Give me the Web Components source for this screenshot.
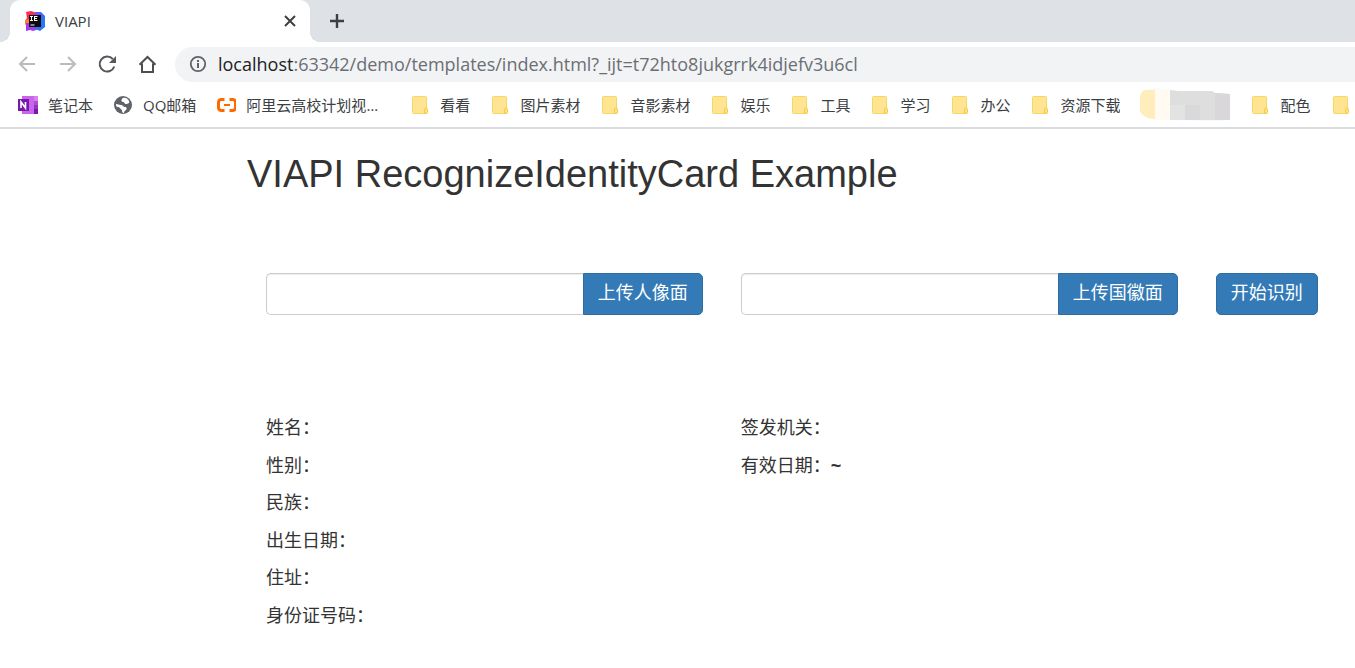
<!DOCTYPE html>
<html lang="zh-CN">
<head>
<meta charset="utf-8">
<title>VIAPI</title>
<style>
html, body { margin: 0; background: #fff; }
body { font-family: "Open Sans", "Noto Sans CJK SC", sans-serif; color: #333; overflow-x: hidden; }
</style>
</head>
<body>
<browser-frame>
  <identity-page></identity-page>
</browser-frame>

<script>
const define = (name, html) => {
  const template = document.createElement('template');
  template.innerHTML = html;
  customElements.define(name, class extends HTMLElement {
    constructor() {
      super();
      this.attachShadow({ mode: 'open' }).append(template.content.cloneNode(true));
    }
  });
};

define('folder-icon', `
<style>:host { display: block; width: 20px; height: 20px; } svg { display: block; }</style>
<svg width="20" height="20" viewBox="0 0 20 20" aria-hidden="true">
  <rect x="2.5" y="1.5" width="14" height="17" rx="1" fill="#ffe591" stroke="#f8d665"/>
  <path d="M14.5 18.500V14.500q0-1.500 1.500-1.500t1.500 1.500v2.500q0 1.500-1.500 1.500z" fill="#ffe27f" stroke="#f6cb45"/>
</svg>`);

define('bookmark-link', `
<style>
:host { display: block; flex: none; }
a { display: flex; align-items: center; gap: 10px; color: #3c4043; text-decoration: none; font-size: 15px; line-height: 20px; white-space: nowrap; }
.icon { width: 20px; height: 20px; flex: none; }
.label { overflow: hidden; text-overflow: ellipsis; max-width: 144px; }
::slotted(svg) { display: block; }
</style>
<a href="#"><span class="icon"><slot name="icon"><folder-icon></folder-icon></slot></span><span class="label"><slot></slot></span></a>`);

define('tab-strip', `
<style>
:host { display: flex; height: 42px; background: #dee1e6; padding-left: 10px; }
.tab { position: relative; display: flex; align-items: center; box-sizing: border-box; width: 300px; padding: 0 12px 0 15px; gap: 10px; background: #fff; border-radius: 10px 10px 0 0; }
.tab::before, .tab::after { content: ""; position: absolute; bottom: 0; width: 10px; height: 10px; }
.tab::before { right: 100%; background: radial-gradient(circle at 0 0, transparent 10px, #fff 10px); }
.tab::after { left: 100%; background: radial-gradient(circle at 100% 0, transparent 10px, #fff 10px); }
.title { flex: 1; font-size: 15px; line-height: 20px; color: #3c4043; }
button { border: 0; background: none; padding: 0; display: grid; place-items: center; }
.new { width: 24px; margin-left: 15px; }
svg { display: block; }
</style>
<div class="tab">
  <svg width="20" height="20" viewBox="0 0 20 20" aria-hidden="true">
    <path d="M1 1 6 0l6 2-3 9-7 2-2-3 2-3z" fill="#fe2b57"/>
    <path d="M0 9l5-1 3 7-5 2-3-4z" fill="#fb8420"/>
    <path d="M1 12l4 0 9 6-6 2-3-1-4 1z" fill="#a63af0"/>
    <path d="M10 1h6l4 4v11l-5 4-6-3z" fill="#2b74f6"/>
    <path d="M10 1h5l2 4-7 3z" fill="#6b57f5"/>
    <rect x="4" y="4" width="12" height="12" fill="#0c0c0c"/>
    <path d="M5 5.500H8M5 9.500H8M6.500 5.500v4M9.500 5v5M9.500 5.500h3M9.500 7.500h2.500M9.500 9.500h3M5.500 14h4" stroke="#fff" fill="none"/>
  </svg>
  <span class="title">VIAPI</span>
  <button aria-label="关闭标签页"><svg width="16" height="16" viewBox="0 0 16 16"><path d="M3 3l10 10M13 3 3 13" stroke="#3c4043" stroke-width="2"/></svg></button>
</div>
<button class="new" aria-label="新标签页"><svg width="16" height="16" viewBox="0 0 16 16"><path d="M8 1v14M1 8h14" stroke="#3c4043" stroke-width="2.400"/></svg></button>`);

define('nav-toolbar', `
<style>
:host { display: flex; align-items: center; box-sizing: border-box; height: 46px; padding: 0 0 2px 17px; }
nav { display: flex; gap: 20px; width: 158px; flex: none; }
button { border: 0; background: none; padding: 0; width: 20px; height: 20px; }
svg { display: block; flex: none; }
.address { flex: 1; display: flex; align-items: center; gap: 11px; height: 35px; padding-left: 14px; background: #f1f3f4; border-radius: 18px 0 0 18px; }
.url { font-size: 18px; line-height: 26px; color: #6b6f74; outline: none; white-space: nowrap; }
.host { color: #202124; }
</style>
<nav aria-label="导航">
  <button aria-label="后退"><svg width="20" height="20" viewBox="0 0 20 20" fill="none" stroke="#b9bbbe" stroke-width="2"><path d="M18 10H4M10 3l-7 7 7 7"/></svg></button>
  <button aria-label="前进"><svg width="20" height="20" viewBox="0 0 20 20" fill="none" stroke="#b9bbbe" stroke-width="2"><path d="M3 10h14M11 3l7 7-7 7"/></svg></button>
  <button aria-label="重新加载"><svg width="20" height="20" viewBox="0 0 20 20" fill="none" stroke="#55595e" stroke-width="2"><path d="M17.300 12.500A7.500 7.500 0 1 1 15.800 5"/><path d="M19 2v7h-7z" fill="#55595e" stroke="none"/></svg></button>
  <button aria-label="主页"><svg width="20" height="20" viewBox="0 0 20 20" fill="none" stroke="#4b4f54" stroke-width="2"><path d="M2.500 10.700 10.500 3l8 7.700M5 9.500V18h11V9.500"/></svg></button>
</nav>
<div class="address">
  <svg width="18" height="18" viewBox="0 0 18 18" aria-hidden="true"><circle cx="9" cy="9" r="7.200" fill="none" stroke="#5f6368" stroke-width="1.800"/><path d="M9 8v5M9 5v2" stroke="#5f6368" stroke-width="2"/></svg>
  <div class="url" role="textbox" aria-label="地址栏" contenteditable="true" spellcheck="false"><span class="host">localhost</span>:63342/demo/templates/index.html?_ijt=t72hto8jukgrrk4idjefv3u6cl</div>
</div>`);

define('bookmarks-bar', `
<style>
:host { display: flex; align-items: center; gap: 20px; height: 41px; box-sizing: border-box; padding: 0 0 5px 18px; border-bottom: 2px solid #dadce0; overflow: hidden; }
.hidden-item { flex: none; display: block; }
</style>
<bookmark-link><svg slot="icon" width="20" height="20" viewBox="0 0 20 20"><path d="M4 1h15v18H4z" fill="#ca64ea"/><path d="M16 1h4v5h-4z" fill="#d783ee"/><path d="M16 6h4v4h-4z" fill="#ae4bd5"/><path d="M16 10h4v4h-4z" fill="#9332bf"/><path d="M16 14h4v5h-4z" fill="#7719aa"/><rect y="4" width="11" height="12" fill="#7719aa"/><path d="M3 13V7l4.500 6V7" fill="none" stroke="#fff" stroke-width="1.600"/></svg>笔记本</bookmark-link>
<bookmark-link><svg slot="icon" width="20" height="20" viewBox="0 0 20 20"><circle cx="10" cy="10" r="9" fill="#5f6368"/><path d="M3 9c2 0 3 1 5 1s2 2 4 2 2 2 1 3-2 1-2 3c-2 0-2-2-2-3-2-1-2-3-4-3S3 11 3 9zM10 3c3-1 5 1 6 3s-1 3-3 3-1-2-3-2-2-3 0-4z" fill="#fff"/></svg>QQ邮箱</bookmark-link>
<bookmark-link><svg slot="icon" width="20" height="20" viewBox="0 0 20 20" fill="none" stroke="#ff6a00" stroke-width="3"><path d="M8.500 4.500H5A3 3 0 0 0 2.500 7.500v5a3 3 0 0 0 2.500 3h3.500M13.500 4.500H17a3 3 0 0 1 2.500 3v5a3 3 0 0 1-2.500 3h-3.500"/><path d="M8 10h6" stroke-width="2"/></svg>阿里云高校计划视频课程</bookmark-link>
<bookmark-link>看看</bookmark-link>
<bookmark-link>图片素材</bookmark-link>
<bookmark-link>音影素材</bookmark-link>
<bookmark-link>娱乐</bookmark-link>
<bookmark-link>工具</bookmark-link>
<bookmark-link>学习</bookmark-link>
<bookmark-link>办公</bookmark-link>
<bookmark-link>资源下载</bookmark-link>
<svg class="hidden-item" width="90" height="36" viewBox="0 0 90 36" aria-hidden="true">
  <path d="M4 3Q14-1 30 3L88 7l2 24q-4 4-20 3l-50-1Q6 34 0 26z" fill="#fafafa"/>
  <path d="M15 3H5Q0 5 0 10v14q3 7 15 8z" fill="#ffedbb"/>
  <path d="M15 3h15v30H15z" fill="#fffbf2"/>
  <path d="M30 3l8 1h34l3 2 15 1v26H30z" fill="#dfdedf"/>
  <path d="M45 18h15v15H45z" fill="#d9d8da"/><path d="M75 6l15 1v26H75z" fill="#d9d7da"/><path d="M30 18h15v15H30z" fill="#e4e3e4"/>
</svg>
<bookmark-link>配色</bookmark-link>
<bookmark-link></bookmark-link>`);

define('browser-frame', `
<style>:host { display: block; }</style>
<tab-strip></tab-strip>
<nav-toolbar></nav-toolbar>
<bookmarks-bar></bookmarks-bar>
<slot></slot>`);

define('primary-button', `
<style>
:host { display: block; flex: none; }
button { height: 42px; padding: 0 14px 3px; border: 1px solid #2e6da4; border-radius: var(--button-radius, 5px); background: #337ab7; color: #fff; font: 18px/24px "Liberation Sans", "Noto Sans CJK SC", sans-serif; white-space: nowrap; display: block; }
</style>
<button type="button"><slot></slot></button>`);

define('upload-field', `
<style>
:host { display: flex; }
input { flex: 1; min-width: 0; box-sizing: border-box; height: 42px; padding: 6px 15px; border: 1px solid #ccc; border-right: 0; border-radius: 5px 0 0 5px; background: #fff; box-shadow: inset 0 1px 1px rgba(0,0,0,.075); font-size: 18px; outline: none; }
primary-button { --button-radius: 0 5px 5px 0; }
</style>
<input type="text" aria-label="文件路径">
<primary-button><slot></slot></primary-button>`);

define('result-list', `
<style>
:host { display: grid; grid-template-rows: repeat(6, 1fr); height: 225px; font: 18px/25px "Liberation Sans", "Noto Sans CJK SC", sans-serif; }
</style>
<slot></slot>`);

define('identity-page', `
<style>
:host { display: block; padding: 24px 0 0 247px; }
h2 { margin: 0; font: 38px/42px "Liberation Sans", Arial, sans-serif; color: #333; white-space: nowrap; }
.row { display: grid; grid-template-columns: 3fr 3fr 1fr; }
.row > * { margin: 0 19px; }
form { padding-top: 78px; }
.results { padding-top: 101px; }
</style>
<h2>VIAPI RecognizeIdentityCard Example</h2>
<form class="row">
  <upload-field>上传人像面</upload-field>
  <upload-field>上传国徽面</upload-field>
  <primary-button>开始识别</primary-button>
</form>
<section class="row results">
  <result-list><span>姓名：</span><span>性别：</span><span>民族：</span><span>出生日期：</span><span>住址：</span><span>身份证号码：</span></result-list>
  <result-list><span>签发机关：</span><span>有效日期：<b>~</b></span></result-list>
</section>`);
</script>
</body>
</html>
